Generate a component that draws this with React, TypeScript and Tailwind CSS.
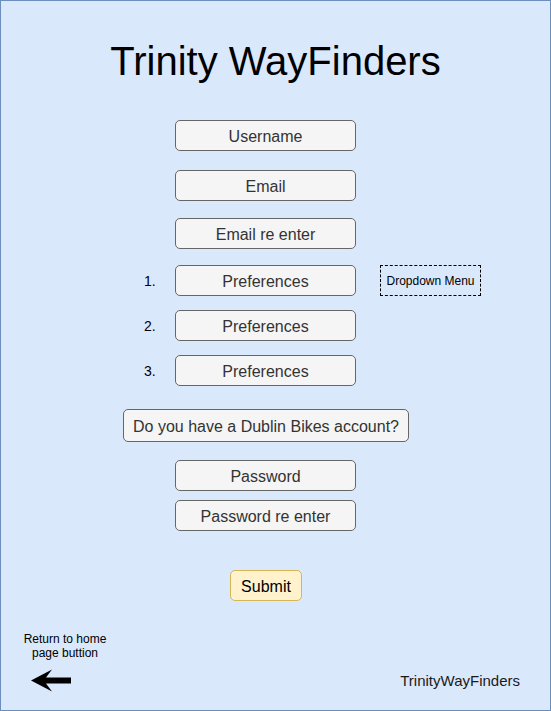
import React from "react";

const font = { fontFamily: '"Liberation Sans", Arial, Helvetica, sans-serif' };

function Field({ label, className = "" }: { label: string; className?: string }) {
  return (
    <div
      className={`flex h-[31px] w-[181px] items-center justify-center rounded-[5px] border border-[#666666] bg-[#f5f5f5] pt-[2px] text-[16px] leading-[18px] text-[#333333] ${className}`}
    >
      {label}
    </div>
  );
}

function PrefRow({ n, first, className = "" }: { n: string; first?: boolean; className?: string }) {
  return (
    <div className={`flex h-[31px] items-center ${className}`}>
      <div className="w-[174px] pl-[143px] pt-[1px] text-[14px] leading-[16px] text-black">{n}</div>
      <Field label="Preferences" />
      {first && (
        <div className="ml-[24px] flex h-[31px] w-[101px] items-center justify-center border border-dashed border-black text-[12px] leading-[14px] text-black">
          Dropdown Menu
        </div>
      )}
    </div>
  );
}

export default function App() {
  return (
    <div
      style={font}
      className="flex h-[711px] w-[551px] flex-col border border-[#6c8ebf] bg-[#dae8fc]"
    >
      <div className="mt-[40px] h-[40px] text-center text-[40px] leading-[40px] text-black">
        Trinity WayFinders
      </div>

      <div className="ml-[174px] mt-[39px] flex flex-col">
        <Field label="Username" />
        <Field label="Email" className="mt-[19px]" />
        <Field label="Email re enter" className="mt-[17px]" />
      </div>

      <PrefRow n="1." first className="mt-[16px]" />
      <PrefRow n="2." className="mt-[14px]" />
      <PrefRow n="3." className="mt-[14px]" />

      <div className="ml-[122px] mt-[23px] flex h-[33px] w-[286px] items-center justify-center rounded-[5px] border border-[#666666] bg-[#f5f5f5] pt-[2px] text-[16px] leading-[18px] text-[#333333]">
        Do you have a Dublin Bikes account?
      </div>

      <div className="ml-[174px] mt-[18px] flex flex-col">
        <Field label="Password" />
        <Field label="Password re enter" className="mt-[9px]" />
      </div>

      <div className="ml-[229px] mt-[39px] flex h-[31px] w-[72px] items-center justify-center rounded-[5px] border border-[#d6b656] bg-[#fff2cc] pt-[2px] text-[16px] leading-[18px] text-black">
        Submit
      </div>

      <div className="mt-[31px] flex items-start justify-between">
        <div className="ml-[14px] flex w-[100px] flex-col">
          <div className="text-center text-[12px] leading-[14px] text-black">
            Return to home
            <br />
            page buttion
          </div>
          <svg className="ml-[15px] mt-[9px]" width="42" height="23" viewBox="0 0 42 23">
            <polygon
              points="1,11.5 22,0.5 16,8.5 41,8.5 41,14.5 16,14.5 22,22.5"
              fill="#000000"
            />
          </svg>
        </div>
        <div className="mr-[30px] mt-[40px] text-[15px] leading-[17px] text-[#1a1a1a]">
          TrinityWayFinders
        </div>
      </div>
    </div>
  );
}
